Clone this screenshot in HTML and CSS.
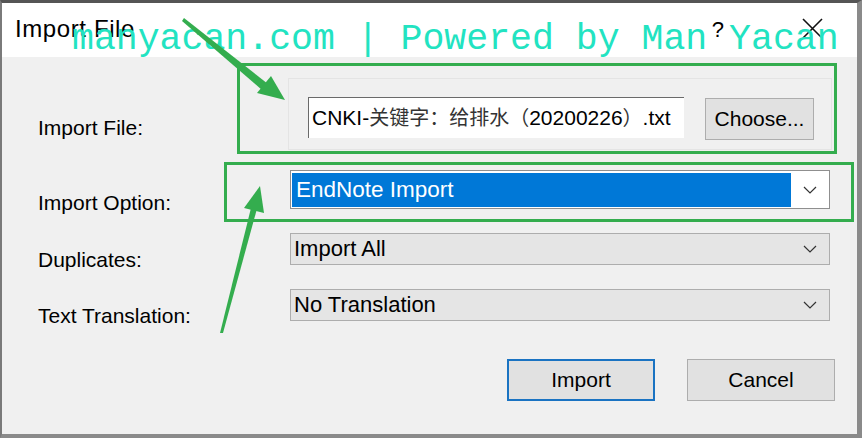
FILE: index.html
```html
<!DOCTYPE html>
<html lang="en">
<head>
    <meta charset="UTF-8">
    <title>Import File</title>
    <link rel="stylesheet" href="styles.css">
</head>
<body>
    <div class="window">
        <div class="titlebar">
            <span class="title">Import File</span>
            <span class="help">?</span>
            <span class="close">
                <svg width="21" height="21" viewBox="0 0 21 21"><path d="M1 1 L20 20 M20 1 L1 20" stroke="#111" stroke-width="1.6" fill="none"/></svg>
            </span>
        </div>
        <div class="content">
            <div class="row row-file">
                <label class="label">Import File:</label>
                <div class="file-panel">
                    <div class="textbox">CNKI-<span class="cjk">关键字：给排水（</span>20200226<span class="cjk">）</span>.txt</div>
                    <button class="btn btn-choose">Choose...</button>
                </div>
            </div>
            <div class="row row-option">
                <label class="label">Import Option:</label>
                <div class="combo combo-edit">
                    <span class="combo-value selected">EndNote Import</span>
                    <span class="chev"><svg width="14" height="8" viewBox="0 0 14 8"><path d="M1 1 L7 7 L13 1" stroke="#333" stroke-width="1.2" fill="none"/></svg></span>
                </div>
            </div>
            <div class="row row-dup">
                <label class="label">Duplicates:</label>
                <div class="combo">
                    <span class="combo-value">Import All</span>
                    <span class="chev"><svg width="14" height="8" viewBox="0 0 14 8"><path d="M1 1 L7 7 L13 1" stroke="#333" stroke-width="1.2" fill="none"/></svg></span>
                </div>
            </div>
            <div class="row row-trans">
                <label class="label">Text Translation:</label>
                <div class="combo">
                    <span class="combo-value">No Translation</span>
                    <span class="chev"><svg width="14" height="8" viewBox="0 0 14 8"><path d="M1 1 L7 7 L13 1" stroke="#333" stroke-width="1.2" fill="none"/></svg></span>
                </div>
            </div>
            <div class="actions">
                <button class="btn btn-default">Import</button>
                <button class="btn">Cancel</button>
            </div>
        </div>

        <!-- watermark + annotation marks drawn over the dialog -->
        <div class="watermark">manyacan.com | Powered by Man Yacan</div>
        <svg class="marks" width="862" height="438" viewBox="0 0 862 438">
            <g fill="none" stroke="#34ad4e" stroke-width="3">
                <rect x="238.5" y="64.5" width="597" height="88"/>
                <rect x="225.5" y="163.5" width="627" height="57"/>
            </g>
            <g fill="#34ad4e" stroke="none">
                <polygon points="182,21 184,18 268,84 262,90"/>
                <polygon points="285,100 271,76 257,93"/>
                <polygon points="220,333 223,333 258,205 252,204"/>
                <polygon points="260,186 244,208 264,213"/>
            </g>
        </svg>
    </div>
</body>
</html>
```

FILE: styles.css
```css
body {
    margin: 0;
    font-family: "Liberation Sans", Arial, sans-serif;
    color: #000;
}
.window {
    position: relative;
    width: 862px;
    height: 438px;
    box-sizing: border-box;
    border-top: 3px solid #555;
    border-left: 2px solid #7a7a7a;
    border-right: 5px solid #8a8a8a;
    border-bottom: 4px solid #8a8a8a;
    background: #f0f0f0;
    overflow: hidden;
}
.titlebar {
    height: 54px;
    background: #fff;
    display: flex;
    align-items: flex-start;
    padding-left: 13px;
    box-sizing: border-box;
}
.title {
    font-size: 24px;
    line-height: 28px;
    margin-top: 12px;
    letter-spacing: 0.6px;
}
.help {
    margin-left: auto;
    font-size: 22px;
    line-height: 24px;
    margin-top: 15px;
}
.close {
    margin-left: 78px;
    margin-right: 34px;
    margin-top: 15px;
    height: 21px;
}
.content {
    padding: 21px 22px 0 36px;
}
.row {
    display: flex;
    align-items: flex-start;
}
.label {
    width: 252px;
    flex: none;
    font-size: 21px;
    line-height: 24px;
}
.row-file { height: 72px; }
.row-file .label { margin-top: 38px; }
.row-option { height: 39px; margin-top: 20px; }
.row-option .label { margin-top: 21px; }
.row-dup { height: 32px; margin-top: 24px; }
.row-dup .label { margin-top: 15px; }
.row-trans { height: 32px; margin-top: 24px; }
.row-trans .label { margin-top: 15px; }

.file-panel {
    margin-left: -2px;
    width: 544px;
    height: 72px;
    box-sizing: border-box;
    border: 1px solid #e4e4e4;
    display: flex;
    align-items: flex-start;
    padding: 18px 0 0 19px;
}
.textbox {
    width: 376px;
    height: 41px;
    box-sizing: border-box;
    background: #fff;
    border-top: 1px solid #6a6a6a;
    border-left: 1px solid #6a6a6a;
    font-size: 21px;
    line-height: 38px;
    padding-left: 3px;
    white-space: nowrap;
    overflow: hidden;
}
.cjk {
    font-family: "Noto Sans CJK SC", sans-serif;
    color: #333;
    font-size: 20px;
}
.btn {
    font-family: "Liberation Sans", Arial, sans-serif;
    font-size: 21px;
    color: #000;
    background: #e1e1e1;
    border: 1px solid #adadad;
    padding: 0;
}
.btn-choose {
    margin-left: 21px;
    width: 109px;
    height: 42px;
    margin-top: 1px;
}
.combo {
    width: 540px;
    height: 32px;
    box-sizing: border-box;
    border: 1px solid #adadad;
    background: #e5e5e5;
    display: flex;
    align-items: center;
    justify-content: space-between;
    font-size: 22px;
}
.combo-value {
    padding-left: 3px;
}
.combo-edit {
    height: 39px;
    background: #fff;
    border-color: #8f8f8f;
    padding: 2px 0 1px 1px;
    align-items: stretch;
    font-size: 22.5px;
}
.combo-value.selected {
    width: 500px;
    background: #0078d7;
    color: #fff;
    line-height: 34px;
    padding-left: 4px;
    box-sizing: border-box;
}
.chev {
    width: 38px;
    display: flex;
    align-items: center;
    justify-content: center;
}
.actions {
    display: flex;
    justify-content: flex-end;
    gap: 32px;
    margin-top: 38px;
}
.actions .btn {
    width: 148px;
    height: 42px;
}
.btn-default {
    border: 2px solid #1a73c2;
}
.watermark {
    position: absolute;
    left: 70px;
    top: 17px;
    font-family: "Liberation Mono", monospace;
    font-size: 36.5px;
    line-height: 40px;
    color: #22e3c1;
    white-space: pre;
}
.marks {
    position: absolute;
    left: -2px;
    top: -3px;
}
```
